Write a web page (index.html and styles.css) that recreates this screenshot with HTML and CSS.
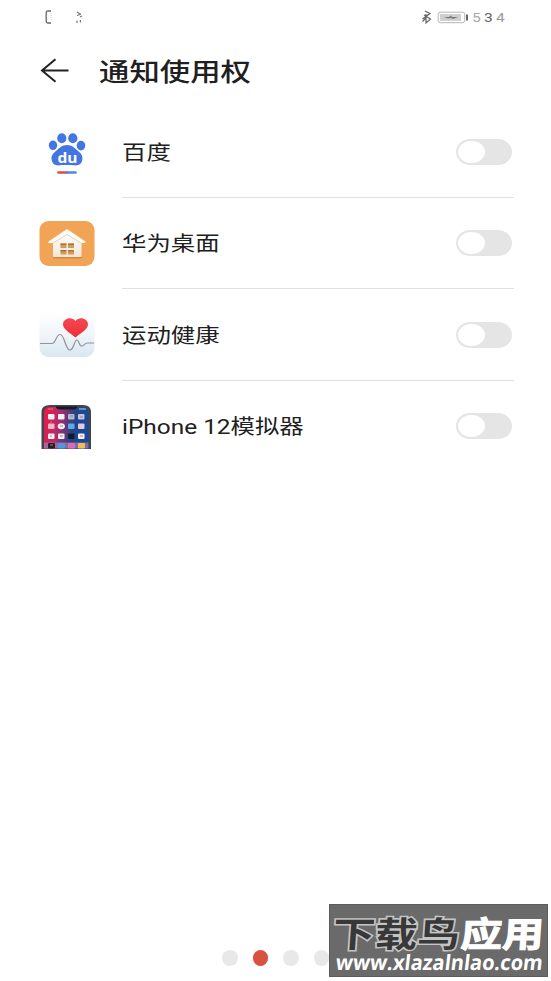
FILE: index.html
```html
<!DOCTYPE html>
<html lang="zh-CN">
<head>
<meta charset="utf-8">
<title>通知使用权</title>
<link rel="stylesheet" href="styles.css">
</head>
<body>
<div class="screen">
  <header class="status">
    <svg class="status-left" width="40" height="16" viewBox="0 0 40 16" fill="none">
      <path d="M6 2H2.800Q1.200 2 1.200 3.500V12.500Q1.200 14 2.800 14H6" stroke="#666" stroke-width="1.300"/>
      <path d="M6.200 4v8" stroke="#bbb" stroke-width=".7" stroke-dasharray="1 1"/>
      <path d="M32 3l4 2.500M32 6.500l3-1M32 11.500v2.500M35.400 11v2.500M35 8l2-1" stroke="#777" stroke-width="1.200"/>
    </svg>
    <div class="status-right">
      <svg width="48" height="16" viewBox="0 0 48 16" fill="none">
        <path d="M4 2l5 2.500L1.500 10M3 6l6.500 4L5 14V5M5 9l-3.500 3.500" stroke="#666" stroke-width="1.200"/>
        <rect x="17.200" y="3.200" width="26.500" height="10.500" rx="2" stroke="#b5b5b5"/>
        <rect x="19" y="5" width="21" height="7" fill="#d0d0d0"/>
        <path d="M23 8h5l2-1.500 1 1.500h6l-5 2-2-1-3 .5z" fill="#777"/>
        <path d="M46 5.500v6" stroke="#555" stroke-width="1.800"/>
      </svg>
      <span class="clock"><span class="dim">5</span><span>3</span><span class="cut">4</span></span>
    </div>
  </header>
  <div class="titlebar">
    <svg width="30" height="26" viewBox="0 0 30 26" fill="none" stroke="#222" stroke-width="2"><path d="M28.500 12.500H2M15.500 1.300L2 12.500l13.500 11.200"/></svg>
    <h1>通知使用权</h1>
  </div>
  <main class="list">
    <div class="row">
      <svg class="icon" width="56" height="48" viewBox="0 0 56 48">
        <g fill="#4276e3"><ellipse cx="14" cy="17.300" rx="4.200" ry="4.800"/><ellipse cx="22.800" cy="10.300" rx="4.600" ry="5"/><ellipse cx="33.800" cy="10.300" rx="4.600" ry="5"/><ellipse cx="42" cy="17.600" rx="4.300" ry="4.800"/>
        <path d="M28 17c5 0 7.500 3 10.500 5.500 4 3.200 5.500 5.500 4.800 9.500-.9 4.700-4.300 5.700-8 5.300-2.500-.3-4.800-.3-7.300-.3s-4.800 0-7.300.3c-3.700.4-7.100-.6-8-5.300-.7-4 .8-6.300 4.800-9.500 3-2.500 5.500-5.500 10.500-5.500z"/></g>
        <text x="18.500" y="34.500" class="du" textLength="20" lengthAdjust="spacingAndGlyphs">du</text>
        <path d="M19.500 44.500H28" stroke="#d94b50" stroke-width="2.600" stroke-linecap="round"/><path d="M28 44.500h8.500" stroke="#5585e8" stroke-width="2.600" stroke-linecap="round"/>
      </svg>
      <span class="label"><span class="wide">百度</span></span><i class="switch"></i>
    </div>
    <div class="row">
      <svg class="icon" width="56" height="48" viewBox="0 0 56 48">
        <defs><linearGradient id="house" x1="0" y1="0" x2="0" y2="1"><stop stop-color="#fff"/><stop offset="1" stop-color="#f2e6d8"/></linearGradient></defs>
        <rect x=".5" y="1" width="55" height="45" rx="9" fill="#f2a456"/>
        <path d="M14 36.500H43V38.500H14z" fill="#d88938"/>
        <path d="M14 22L28 12l14.500 10v15H14z" fill="url(#house)"/>
        <path d="M28 9L46.500 21.500Q47 23 45 23H42L28 14.500 14 23H11Q8.500 23 9.500 21.500z" fill="#fffaf4"/>
        <path d="M14 23l14-8.500L42 23" fill="none" stroke="#d8d5d1" stroke-width="1"/>
        <path d="M21.500 23.500h6v4.500h-6zM29 23.500h6v4.500h-6zM21.500 30h6v4.500h-6zM29 30h6v4.500h-6z" fill="#d69a50"/>
        <path d="M21.500 23.500h6v1.500h-6zM29 23.500h6v1.500h-6zM21.500 30h6v1.500h-6zM29 30h6v1.500h-6z" fill="#a8763c"/>
      </svg>
      <span class="label"><span class="wide">华为桌面</span></span><i class="switch"></i>
    </div>
    <div class="row">
      <svg class="icon" width="56" height="48" viewBox="0 0 56 48">
        <defs><linearGradient id="health" x1="0" y1="0" x2="0" y2="1"><stop stop-color="#fff"/><stop offset=".5" stop-color="#f0f5f9"/><stop offset="1" stop-color="#d8e7f0"/></linearGradient><linearGradient id="heart" x1="0" y1="0" x2="0" y2="1"><stop stop-color="#f34751"/><stop offset="1" stop-color="#ee3039"/></linearGradient></defs>
        <rect x=".5" y="1" width="55" height="45" rx="9" fill="url(#health)"/>
        <path d="M36.500 26.500C33 23 24 19 24 13.500c0-6 8.500-8.500 12.500-3.500 4-5 12.500-2.500 12.500 3.500 0 5.500-9 9.500-12.500 13z" fill="url(#heart)"/>
        <path d="M1 32.500h12c4 0 4-9 8-9 5 0 5 15.500 10 15.500 4 0 4-10 7-10 2 0 2 6 4.500 6 3 0 2.500-3 6-3H55" fill="none" stroke="#8e9498" stroke-width="1.200"/>
      </svg>
      <span class="label"><span class="wide">运动健康</span></span><i class="switch"></i>
    </div>
    <div class="row">
      <svg class="icon" width="56" height="48" viewBox="0 0 56 48">
        <defs><linearGradient id="wall" x1="0" y1="0" x2="1" y2=".15"><stop stop-color="#f01848"/><stop offset=".35" stop-color="#b62b68"/><stop offset=".7" stop-color="#274384"/><stop offset="1" stop-color="#164a99"/></linearGradient></defs>
        <path d="M2.500 46V9Q2.500 2 11 2H44Q52 2 52 9V46z" fill="#42454d"/>
        <path d="M5 45.500V10Q5 4 11 4H44Q49.500 4 49.500 10V45.500z" fill="url(#wall)"/>
        <path d="M17 3.500H38V4.500Q37 6.500 34 6.500H21Q18 6.500 17 4.500z" fill="#181b25"/>
        <path d="M40 6h7" stroke="#b9d1f0"/><path d="M9 6h5" stroke="#fa7183"/>
        <g fill="#f3eff5"><rect x="9" y="11" width="6.500" height="5.500" rx="1"/><rect x="19" y="11" width="6.500" height="5.500" rx="1"/><rect x="29" y="11" width="6.500" height="5.500" rx="1" fill="#a8bdcc"/><rect x="39" y="11" width="6.500" height="5.500" rx="1" fill="#b9c6db"/>
        <rect x="9" y="20.500" width="6.500" height="5.500" rx="1" fill="#f3b5c6"/><ellipse cx="22.300" cy="23.300" rx="3.600" ry="3"/><rect x="29" y="20.500" width="6.500" height="5.500" rx="1" fill="#59aceb"/><rect x="39" y="20.500" width="6.500" height="5.500" rx="1" fill="#e4c9e1"/>
        <rect x="9" y="30.500" width="6.500" height="5.500" rx="1"/><rect x="19" y="30.500" width="6.500" height="5.500" rx="1"/><rect x="29" y="30.500" width="6.500" height="5.500" rx="1" fill="#111c27"/><rect x="39" y="30.500" width="6.500" height="5.500" rx="1"/></g>
        <path d="M5 39.500H49.500V45.500H5z" fill="#9a7fa6" opacity=".75"/>
        <rect x="9" y="40" width="7" height="5.500" rx="1" fill="#241f2b"/><rect x="19" y="40" width="7" height="5.500" rx="1" fill="#3e9df0"/><rect x="29" y="40" width="7" height="5.500" rx="1" fill="#e368bb"/><rect x="39" y="40" width="7" height="5.500" rx="1" fill="#f0bd57"/>
        <path d="M11 19h2M21 23h3M31 13h3M41 14h3M11 33h2M21 33h3M41 33h3M11 42h3M21 43h3M31 43h3" stroke="#d26b80" stroke-width="1"/>
      </svg>
      <span class="label"><span class="wide">iPhone 12模拟器</span></span><i class="switch"></i>
    </div>
  </main>
  <footer class="bottom">
    <div class="dots"><i></i><i class="active"></i><i></i><i></i></div>
    <div class="watermark">
      <svg width="219" height="73" viewBox="0 0 219 73">
        <text class="wm-dark" transform="translate(3 42.500) skewX(-4)" textLength="127" lengthAdjust="spacingAndGlyphs">下载鸟</text>
        <text class="wm-light" transform="translate(131 42.500) skewX(-4)" textLength="83" lengthAdjust="spacingAndGlyphs">应用</text>
        <text class="wm-url" transform="translate(6 66) skewX(-7)" textLength="207" lengthAdjust="spacingAndGlyphs">www.xlazalnlao.com</text>
      </svg>
    </div>
  </footer>
</div>
</body>
</html>
```
FILE: styles.css
```css
* { box-sizing: border-box; }
body { margin: 0; background: #fff; color: #202020; font-family: Roboto, "Noto Sans CJK SC", sans-serif; }
.screen { width: 551px; height: 981px; display: flex; flex-direction: column; overflow: hidden; }
.status { height: 36px; flex: none; padding: 9px 44px 0 45px; display: flex; justify-content: space-between; }
.status-right { display: flex; }
.clock { display: flex; width: 38px; padding-left: 4px; font-size: 13px; line-height: 17px; color: #666; gap: 3px; }
.clock span { width: 9px; transform: scaleX(1.2); }
.clock .dim { color: #aaa; }
.clock .cut { color: #999; }
.titlebar { height: 70px; flex: none; padding-left: 40px; display: flex; align-items: center; gap: 28px; }
h1 { margin: 3px 0 0 .5px; font-size: 25px; line-height: 36px; font-weight: 500; transform: scaleX(1.215); transform-origin: left; white-space: nowrap; }
.list { height: 366px; flex: none; display: grid; grid-template-rows: repeat(4, 1fr); padding: 0 37px 0 39px; }
.row { display: grid; grid-template-columns: 83px 1fr 58.500px; align-items: center; }
.row:not(:last-child) { background: linear-gradient(#e1e1e1, #e1e1e1) 83px 100% / 392px 1px no-repeat; }
.icon { margin-top: 1px; }
.label { padding: 2px 0 0 .4px; font-size: 20px; line-height: 30px; white-space: nowrap; }
.wide { display: inline-block; transform: scaleX(1.22); transform-origin: left; }
.switch { width: 56px; height: 26px; border-radius: 14px / 13px; background: #e5e5e5; padding: 2px; }
.switch::before { content: ""; display: block; width: 27px; height: 22px; border-radius: 50%; background: #fff; }
.du { font: bold 15px "Open Sans", sans-serif; fill: #fff; }
.bottom { margin-top: auto; height: 77px; display: flex; justify-content: flex-end; padding-right: 3px; }
.dots { display: flex; gap: 15px; width: 107px; height: 16px; margin-top: 46px; overflow: hidden; }
.dots i { flex: 0 0 15.600px; height: 15.600px; border-radius: 50%; background: #e8e8e8; }
.dots .active { background: #d95140; }
.watermark { width: 219px; height: 73px; background: #6a6a6a; box-shadow: inset 0 0 0 1px #5c5c5c; }
.watermark svg { display: block; overflow: visible; }
.wm-dark, .wm-light { font: bold 35px "Noto Sans CJK SC", sans-serif; }
.wm-dark { fill: #383838; stroke: #c4c4c4; stroke-width: 3px; paint-order: stroke; }
.wm-light { fill: #fff; stroke: #fff; stroke-width: 1px; }
.wm-url { font: bold 21px "Open Sans", sans-serif; fill: #fff; }
```
